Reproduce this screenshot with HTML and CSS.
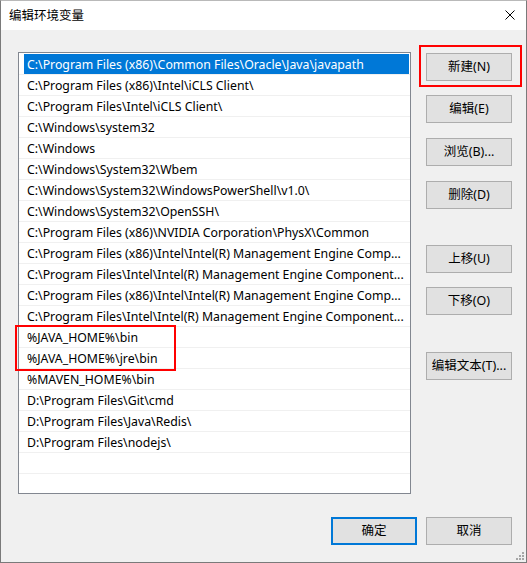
FILE: index.html
```html
<!DOCTYPE html>
<html lang="zh-CN">
<head>
<meta charset="utf-8">
<title>编辑环境变量</title>
<link rel="stylesheet" href="styles.css">
</head>
<body>
<div class="window">
  <div class="titlebar">
    <span class="title">编辑环境变量</span>
    <svg class="close" width="10" height="10" viewBox="0 0 10 10"><path d="M0.5 0.5 L9.5 9.5 M9.5 0.5 L0.5 9.5" stroke="#000" stroke-width="1" fill="none"/></svg>
  </div>
  <div class="body">
    <div class="main">
      <div class="listbox">
        <div class="row"><div class="cell selected">C:\Program Files (x86)\Common Files\Oracle\Java\javapath</div></div>
        <div class="row"><div class="cell">C:\Program Files (x86)\Intel\iCLS Client\</div></div>
        <div class="row"><div class="cell">C:\Program Files\Intel\iCLS Client\</div></div>
        <div class="row"><div class="cell">C:\Windows\system32</div></div>
        <div class="row"><div class="cell">C:\Windows</div></div>
        <div class="row"><div class="cell">C:\Windows\System32\Wbem</div></div>
        <div class="row"><div class="cell">C:\Windows\System32\WindowsPowerShell\v1.0\</div></div>
        <div class="row"><div class="cell">C:\Windows\System32\OpenSSH\</div></div>
        <div class="row"><div class="cell">C:\Program Files (x86)\NVIDIA Corporation\PhysX\Common</div></div>
        <div class="row"><div class="cell">C:\Program Files (x86)\Intel\Intel(R) Management Engine Comp...</div></div>
        <div class="row"><div class="cell">C:\Program Files\Intel\Intel(R) Management Engine Component...</div></div>
        <div class="row"><div class="cell">C:\Program Files (x86)\Intel\Intel(R) Management Engine Comp...</div></div>
        <div class="row"><div class="cell">C:\Program Files\Intel\Intel(R) Management Engine Component...</div></div>
        <div class="row"><div class="cell">%JAVA_HOME%\bin</div></div>
        <div class="row"><div class="cell">%JAVA_HOME%\jre\bin</div></div>
        <div class="row"><div class="cell">%MAVEN_HOME%\bin</div></div>
        <div class="row"><div class="cell">D:\Program Files\Git\cmd</div></div>
        <div class="row"><div class="cell">D:\Program Files\Java\Redis\</div></div>
        <div class="row"><div class="cell">D:\Program Files\nodejs\</div></div>
        <div class="row"><div class="cell"></div></div>
        <div class="row"><div class="cell"></div></div>
      </div>
      <div class="side">
        <button class="btn">新建(N)</button>
        <button class="btn g14">编辑(E)</button>
        <button class="btn">浏览(B)...</button>
        <button class="btn">删除(D)</button>
        <button class="btn g36">上移(U)</button>
        <button class="btn g14">下移(O)</button>
        <button class="btn g37">编辑文本(T)...</button>
      </div>
    </div>
    <div class="footer">
      <button class="btn default">确定</button>
      <button class="btn">取消</button>
    </div>
    <svg class="grip" width="8" height="8" viewBox="0 0 8 8">
      <rect x="6" y="0" width="2" height="2" fill="#a6a6a6"/>
      <rect x="3" y="3" width="2" height="2" fill="#a6a6a6"/>
      <rect x="6" y="3" width="2" height="2" fill="#a6a6a6"/>
      <rect x="0" y="6" width="2" height="2" fill="#a6a6a6"/>
      <rect x="3" y="6" width="2" height="2" fill="#a6a6a6"/>
      <rect x="6" y="6" width="2" height="2" fill="#a6a6a6"/>
    </svg>
  </div>
  <div class="mark mark-new"></div>
  <div class="mark mark-java"></div>
</div>
</body>
</html>
```

FILE: styles.css
```css
* { box-sizing: border-box; }
html, body { margin: 0; padding: 0; background: #f0f0f0; }
body {
  font-family: "Noto Sans", "Noto Sans CJK SC", sans-serif;
  font-size: 12px;
  color: #000;
}
.window {
  position: relative;
  width: 527px;
  height: 563px;
  border: 1px solid #7a7a7a;
  border-top-color: #b9b9b9;
  background: #f0f0f0;
  display: flex;
  flex-direction: column;
}
.titlebar {
  height: 29px;
  background: #fff;
  display: flex;
  align-items: center;
  justify-content: space-between;
  padding: 0 11px 0 8px;
  flex: none;
}
.title {
  font-family: "Noto Sans CJK SC", sans-serif;
  font-size: 12.5px;
  line-height: 16px;
  margin-top: -1px;
}
.close { display: block; margin-top: -1px; }
.body {
  position: relative;
  flex: 1;
  padding: 22px 14px 0 17px;
}
.main { display: flex; align-items: flex-start; }
.listbox {
  width: 393px;
  height: 442px;
  border: 1px solid #828790;
  background: #fff;
  padding-top: 1px;
  overflow: hidden;
  flex: none;
}
.row {
  height: 21px;
  border-bottom: 1px solid #f0f0f0;
}
.cell {
  height: 20px;
  margin: 0 1px 0 5px;
  padding-left: 3px;
  font-size: 12.3px;
  line-height: 21px;
  white-space: nowrap;
  overflow: hidden;
}
.cell.selected { background: #0078d7; color: #fff; }
.side {
  margin-left: 15px;
  padding-top: 1px;
  display: flex;
  flex-direction: column;
}
.btn {
  width: 86px;
  height: 28px;
  border: 1px solid #adadad;
  background: #e1e1e1;
  font-family: "Noto Sans", "Noto Sans CJK SC", sans-serif;
  font-size: 12.5px;
  color: #000;
  padding: 0;
  margin: 0;
  line-height: 26px;
}
.side .btn + .btn { margin-top: 15px; }
.side .btn.g14 { margin-top: 14px; }
.side .btn.g36 { margin-top: 36px; }
.side .btn.g37 { margin-top: 37px; }
.footer {
  display: flex;
  justify-content: flex-end;
  gap: 9px;
  margin-top: 23px;
}
.btn.default { border: 2px solid #0078d7; line-height: 24px; }
.grip { position: absolute; right: 2px; bottom: 2px; }
.mark { position: absolute; border: 2px solid #ff0000; }
.mark-new { left: 418px; top: 44px; width: 103px; height: 42px; }
.mark-java { left: 14px; top: 324px; width: 161px; height: 46px; }
```
